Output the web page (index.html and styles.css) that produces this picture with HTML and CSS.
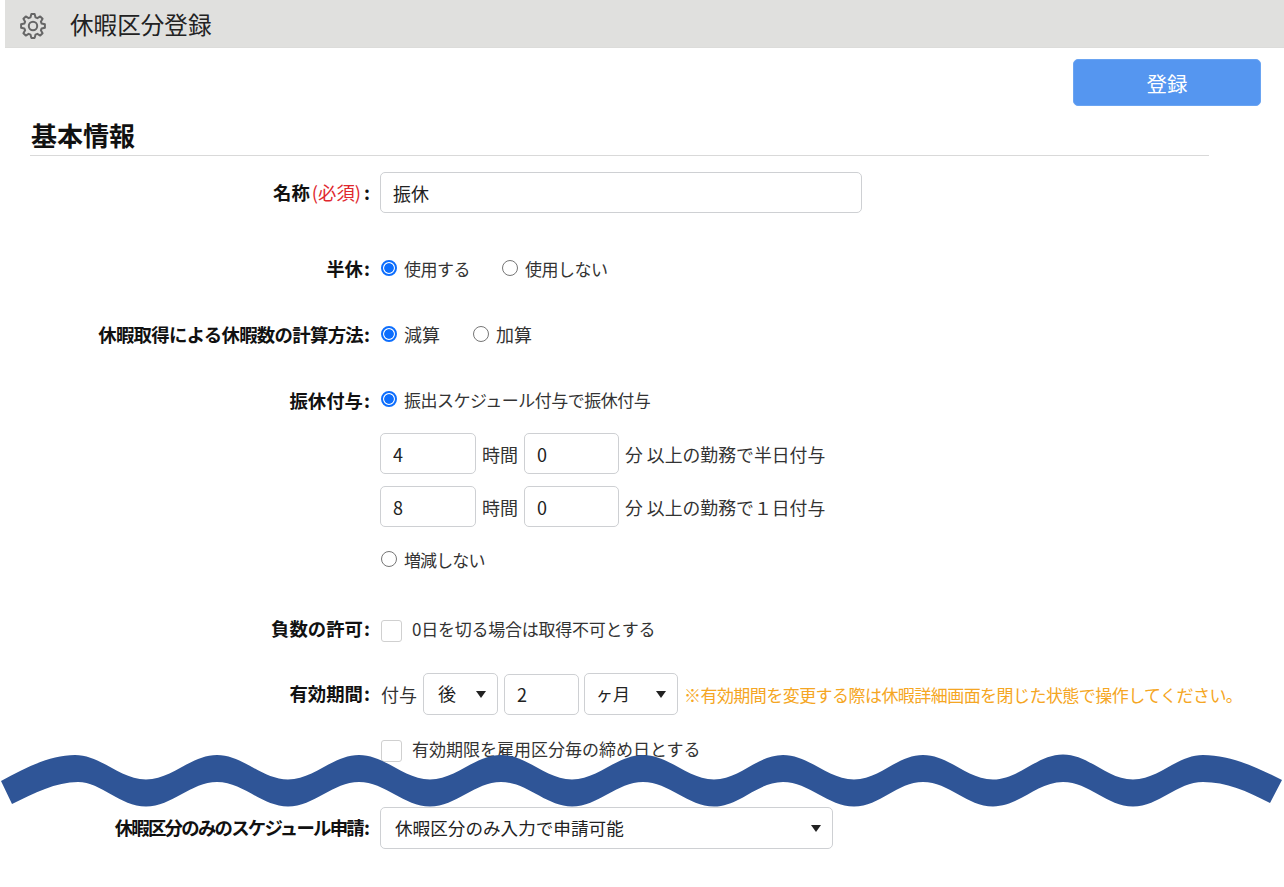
FILE: index.html
```html
<!DOCTYPE html>
<html lang="ja">
<head>
<meta charset="utf-8">
<title>休暇区分登録</title>
<link rel="stylesheet" href="styles.css">
</head>
<body>
<header class="page-header">
  <svg class="gear" viewBox="0 0 26 26" fill="none" stroke="#666" stroke-width="2" stroke-linejoin="round"><polygon points="14.67,1.12 15.48,4.35 17.36,5.13 20.22,3.42 22.58,5.78 20.87,8.64 21.65,10.52 24.88,11.33 24.88,14.67 21.65,15.48 20.87,17.36 22.58,20.22 20.22,22.58 17.36,20.87 15.48,21.65 14.67,24.88 11.33,24.88 10.52,21.65 8.64,20.87 5.78,22.58 3.42,20.22 5.13,17.36 4.35,15.48 1.12,14.67 1.12,11.33 4.35,10.52 5.13,8.64 3.42,5.78 5.78,3.42 8.64,5.13 10.52,4.35 11.33,1.12"/><circle cx="13" cy="13" r="4.2"/></svg>
  <h1 class="page-title">休暇区分登録</h1>
</header>
<div class="toolbar"><button class="btn-primary" type="button">登録</button></div>
<h2 class="section-title">基本情報</h2>
<form class="form">
  <div class="row row-name">
    <label class="row-label">名称<span class="req">(必須)</span><span class="colon">:</span></label>
    <div class="row-body"><input class="field field-name" type="text" value="振休"></div>
  </div>
  <div class="row row-half">
    <label class="row-label">半休<span class="colon">:</span></label>
    <div class="row-body gap-half">
      <label class="opt tight"><input class="radio" type="radio" name="half" checked>使用する</label>
      <label class="opt tight"><input class="radio" type="radio" name="half">使用しない</label>
    </div>
  </div>
  <div class="row row-calc">
    <label class="row-label label-calc">休暇取得による休暇数の計算方法<span class="colon">:</span></label>
    <div class="row-body gap-calc">
      <label class="opt wide"><input class="radio" type="radio" name="calc" checked>減算</label>
      <label class="opt wide"><input class="radio" type="radio" name="calc">加算</label>
    </div>
  </div>
  <div class="row row-grant">
    <label class="row-label">振休付与<span class="colon">:</span></label>
    <div class="row-body col">
      <label class="opt tight"><input class="radio" type="radio" name="grant" checked>振出スケジュール付与で振休付与</label>
      <div class="line line-first"><input class="field field-num" type="text" value="4"><span class="wide">時間</span><input class="field field-min" type="text" value="0"><span class="line-text">分 以上の勤務で半日付与</span></div>
      <div class="line line-second"><input class="field field-num" type="text" value="8"><span class="wide">時間</span><input class="field field-min" type="text" value="0"><span class="line-text">分 以上の勤務で１日付与</span></div>
      <label class="opt opt-last"><input class="radio" type="radio" name="grant">増減しない</label>
    </div>
  </div>
  <div class="row row-neg">
    <label class="row-label">負数の許可<span class="colon">:</span></label>
    <div class="row-body"><label class="opt opt-check text-17 neg-text"><input class="check" type="checkbox">0日を切る場合は取得不可とする</label></div>
  </div>
  <div class="row row-valid">
    <label class="row-label">有効期間<span class="colon">:</span></label>
    <div class="row-body line-valid">
      <span class="wide">付与</span>
      <div class="select select-after"><span>後</span><i class="caret"></i></div>
      <input class="field field-period" type="text" value="2">
      <div class="select select-unit"><span>ヶ月</span><i class="caret"></i></div>
      <span class="note">※有効期間を変更する際は休暇詳細画面を閉じた状態で操作してください。</span>
    </div>
  </div>
  <div class="row row-close">
    <span class="row-label"></span>
    <div class="row-body"><label class="opt opt-check text-17"><input class="check" type="checkbox">有効期限を雇用区分毎の締め日とする</label></div>
  </div>
  <div class="row row-sched">
    <label class="row-label label-sched">休暇区分のみのスケジュール申請<span class="colon">:</span></label>
    <div class="row-body"><div class="select select-wide"><span>休暇区分のみ入力で申請可能</span><i class="caret"></i></div></div>
  </div>
</form>
<svg class="wave" viewBox="0 0 1284 887"><path fill="#2f5597" d="M1 781 C25 768 50 755 75 755 C101 755 120 779.5 146 779.5 S191 755 217 755 S262 779.5 288 779.5 S333 755 359 755 S404 779.5 430 779.5 S475 755 501 755 S546 779.5 572 779.5 S617 755 643 755 S688 779.5 714 779.5 S757 755 783 755 S828 779.5 854 779.5 S897 755 923 755 S967 779.5 993 779.5 S1037 754.5 1063 754.5 S1107 779.5 1133 779.5 S1177 755 1203 755 C1230 755 1256 767 1282 780 L1270 803 C1247 791 1226 782 1203 782 C1177 782 1159 806.5 1133 806.5 S1089 782 1063 782 S1019 806.5 993 806.5 S949 782 923 782 S880 806.5 854 806.5 S809 782 783 782 S740 806.5 714 806.5 S669 782 643 782 S598 806.5 572 806.5 S527 782 501 782 S456 806.5 430 806.5 S385 782 359 782 S314 806.5 288 806.5 S243 782 217 782 S172 806.5 146 806.5 S101 782 78 782 C56 782 34 793 12 804 Z"/></svg>
</body>
</html>
```
FILE: styles.css
```css
* { box-sizing: border-box; }
html, body { margin: 0; padding: 0; background: #fff; }
body {
  position: relative;
  width: 1284px;
  height: 887px;
  overflow: hidden;
  font-family: "Noto Sans CJK JP", "Noto Sans", sans-serif;
  font-size: 16.5px;
  color: #333;
}
.page-header {
  display: flex;
  align-items: center;
  height: 48px;
  margin-left: 5px;
  padding-left: 15px;
  background: #e0e0de;
  border-bottom: 1px solid #dcdcda;
}
.gear { width: 26px; height: 26px; margin-top: 5px; flex: none; }
.page-title {
  margin: 3px 0 0 24px;
  font-size: 23.6px;
  font-weight: 400;
  line-height: 1;
  color: #222;
}
.toolbar { display: flex; justify-content: flex-end; padding: 11px 23px 0 0; }
.btn-primary {
  width: 188px;
  height: 47px;
  padding: 0;
  border: 1px solid #6aa4f2;
  border-radius: 5px;
  background: #5596f0;
  color: #fff;
  font: inherit;
  font-size: 20.5px;
}
.section-title {
  width: 1179px;
  height: 50px;
  margin: 0 0 0 30px;
  padding: 13px 0 0 1px;
  border-bottom: 1px solid #d9d9d9;
  font-size: 26px;
  font-weight: 700;
  line-height: 32px;
  color: #111;
}
.row { display: flex; align-items: center; }
.row-label {
  flex: none;
  width: 370px;
  margin-bottom: 2px;
  text-align: right;
  font-size: 18.4px;
  font-weight: 700;
  color: #111;
}
.label-calc { letter-spacing: -.7px; }
.label-sched { letter-spacing: -1.75px; }
.colon { padding-left: 1px; letter-spacing: 0; }
.req { padding: 0 2px; color: #e0282e; font-weight: 400; }
.row-body { display: flex; align-items: center; margin-left: 10px; }
.col { flex-direction: column; align-items: flex-start; }
.gap-half { gap: 31px; }
.gap-calc { gap: 32px; margin-bottom: 2px; }
.gap-calc .radio { margin-top: 0; }
.row-name { margin-top: 16px; }
.row-half { margin-top: 44px; height: 24px; }
.row-calc { margin-top: 42px; height: 24px; }
.row-grant { margin-top: 41px; align-items: flex-start; }
.row-grant .row-label { line-height: 24px; }
.row-neg { margin-top: 45px; height: 24px; }
.row-valid { margin-top: 32px; }
.row-close { margin-top: 22px; height: 24px; }
.row-sched { margin-top: 46px; }
.opt { display: flex; align-items: center; height: 24px; line-height: 24px; white-space: nowrap; }
.opt-last { margin-top: 21px; font-size: 17px; letter-spacing: -.9px; }
.opt-check { gap: 10px; }
.wide { font-size: 18px; }
.line-text { font-size: 17.85px; }
.tight { font-size: 17px; letter-spacing: -.5px; }
.text-17 { font-size: 17px; }
.neg-text { letter-spacing: -.25px; }
.radio {
  appearance: none;
  flex: none;
  width: 16px;
  height: 16px;
  margin: -2px 7px 0 1px;
  border: 1.5px solid #767676;
  border-radius: 50%;
  background: #fff;
}
.radio:checked {
  border: 2px solid #0d6efd;
  background: radial-gradient(circle, #0d6efd 0 4.4px, #fff 5.2px);
}
.check {
  appearance: none;
  flex: none;
  width: 21px;
  height: 22px;
  margin: 4px 0 0 1px;
  border: 1px solid #d0d0d0;
  border-radius: 3px;
  background: #fff;
}
.field {
  height: 41px;
  padding: 0 12px;
  border: 1px solid #ced0d3;
  border-radius: 5px;
  background: #fff;
  font: inherit;
  font-size: 18px;
  color: #222;
}
.field-name { width: 482px; }
.field-num { width: 96px; }
.field-min { width: 95px; }
.line { display: flex; align-items: center; gap: 6px; }
.line-first { margin-top: 21px; }
.line-second { margin-top: 12px; }
.line-valid { gap: 6px; }
.line-valid > span:first-child { margin-left: 1px; }
.field-period { width: 75px; }
.select {
  display: flex;
  align-items: center;
  justify-content: space-between;
  height: 42px;
  padding: 0 11px 0 14px;
  border: 1px solid #ced0d3;
  border-radius: 5px;
  background: #fff;
  font-size: 18px;
  color: #222;
}
.select span { margin-bottom: 2px; }
.select-after { width: 75px; }
.select-unit { width: 94px; margin-left: -1px; padding-left: 11px; font-size: 17px; }
.select-wide { width: 453px; }
.select-wide span { font-size: 17.6px; }
.caret {
  width: 0;
  height: 0;
  border-left: 5.5px solid transparent;
  border-right: 5.5px solid transparent;
  border-top: 7px solid #222;
}
.note { color: #f5a623; white-space: nowrap; font-size: 17px; letter-spacing: -.55px; }
.wave { position: absolute; left: 0; top: 0; width: 1284px; height: 887px; pointer-events: none; }
```
